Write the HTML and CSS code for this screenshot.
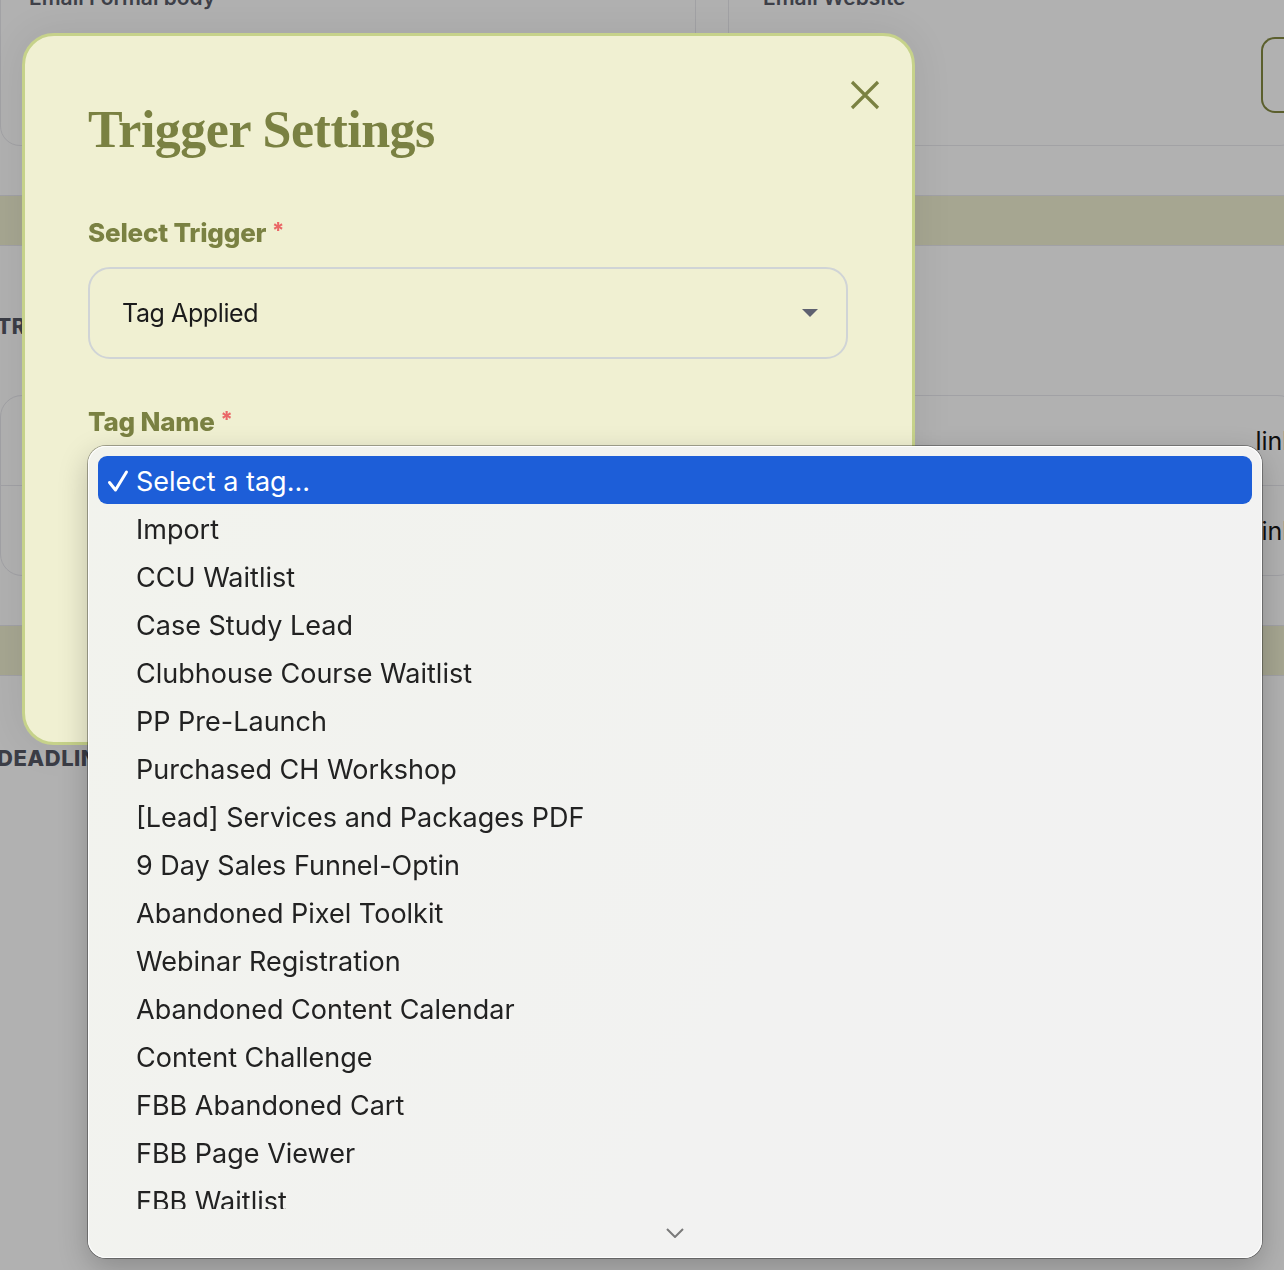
FILE: index.html
```html
<!DOCTYPE html>
<html lang="en">
<head>
    <meta charset="UTF-8">
    <meta name="viewport" content="width=device-width, initial-scale=1.0">
    <title>Trigger Settings</title>
    <link rel="stylesheet" href="styles.css">
</head>
<body>
    <!-- page behind the modal -->
    <div class="page">
        <div class="top-row">
            <div class="card card-left">
                <p class="card-title">Email Formal body</p>
            </div>
            <div class="card card-right">
                <p class="card-title">Email Website</p>
                <span class="card-btn"></span>
            </div>
        </div>
        <div class="band"></div>
        <div class="table-head">TRIGGER</div>
        <div class="table">
            <div class="row"><span class="row-link">link</span></div>
            <div class="row"><span class="row-link">link</span></div>
        </div>
        <div class="band band-low"></div>
        <div class="section-head">DEADLINE</div>
    </div>

    <div class="overlay"></div>

    <div class="modal">
        <button class="close-btn" aria-label="Close">
            <svg width="32" height="32" viewBox="0 0 32 32"><path d="M3 3 L29 29 M29 3 L3 29" stroke="#7a8142" stroke-width="3.2" fill="none"/></svg>
        </button>
        <h1 class="modal-title">Trigger Settings</h1>

        <label class="field-label">Select Trigger <span class="req">*</span></label>
        <div class="select-box">
            <span>Tag Applied</span>
            <span class="caret"></span>
        </div>

        <label class="field-label">Tag Name <span class="req">*</span></label>
        <div class="select-box select-hidden"></div>
    </div>

    <!-- native select popup for Tag Name -->
    <div class="popup">
        <ul class="options">
            <li class="option selected">
                <svg class="check" width="22" height="24" viewBox="0 0 22 24"><path d="M2.5 13.5 L8.5 21 L19.5 3" stroke="#ffffff" stroke-width="3" stroke-linecap="round" stroke-linejoin="round" fill="none"/></svg>
                Select a tag...
            </li>
            <li class="option">Import</li>
            <li class="option">CCU Waitlist</li>
            <li class="option">Case Study Lead</li>
            <li class="option">Clubhouse Course Waitlist</li>
            <li class="option">PP Pre-Launch</li>
            <li class="option">Purchased CH Workshop</li>
            <li class="option">[Lead] Services and Packages PDF</li>
            <li class="option">9 Day Sales Funnel-Optin</li>
            <li class="option">Abandoned Pixel Toolkit</li>
            <li class="option">Webinar Registration</li>
            <li class="option">Abandoned Content Calendar</li>
            <li class="option">Content Challenge</li>
            <li class="option">FBB Abandoned Cart</li>
            <li class="option">FBB Page Viewer</li>
            <li class="option">FBB Waitlist</li>
            <li class="option">FBB Webinar</li>
        </ul>
        <div class="scroll-more">
            <svg width="18" height="10" viewBox="0 0 18 10"><path d="M1 1 L9 9 L17 1" stroke="#7a7a7a" stroke-width="2" fill="none"/></svg>
        </div>
    </div>
</body>
</html>
```

FILE: styles.css
```css
body {
    margin: 0;
    background: #ffffff;
    font-family: Inter, "Liberation Sans", sans-serif;
    height: 1270px;
    overflow: hidden;
}

/* background page */
.page {
    width: 1300px;
}
.top-row {
    display: flex;
    gap: 32px;
    margin-top: -40px;
    height: 186px;
}
.card {
    border: 1px solid #e9e9ee;
    border-radius: 20px;
    box-sizing: border-box;
}
.card-left {
    width: 696px;
    padding: 24px 28px;
}
.card-right {
    flex: 1;
    display: flex;
    align-items: flex-start;
    justify-content: space-between;
    padding: 24px 0 0 34px;
}
.card-title {
    margin: 0;
    font-size: 21px;
    font-weight: 600;
    color: #5a5d69;
}
.card-btn {
    width: 36px;
    height: 72px;
    margin-top: 52px;
    border: 2px solid #838942;
    border-right: none;
    border-radius: 14px 0 0 14px;
}
.band {
    margin-top: 49px;
    height: 49px;
    background: #efefd1;
    border-top: 1px solid #e8e8ee;
    border-bottom: 1px solid #e8e8ee;
}
.table-head {
    height: 149px;
    box-sizing: border-box;
    padding-top: 68px;
    margin-left: -3px;
    font-size: 21px;
    line-height: 26px;
    font-weight: 800;
    color: #555965;
    letter-spacing: 0.5px;
}
.table {
    border: 1px solid #e8e8ee;
    border-radius: 22px;
}
.row {
    height: 89px;
    display: flex;
    align-items: center;
    justify-content: flex-end;
}
.row + .row {
    border-top: 1px solid #e8e8ee;
}
.row-link {
    font-size: 25px;
    color: #181818;
    margin-right: 3px;
}
.band-low {
    margin-top: 49px;
}
.section-head {
    margin: 69px 0 0 -3px;
    font-size: 22px;
    font-weight: 800;
    color: #555965;
    letter-spacing: 0.5px;
}

.overlay {
    position: fixed;
    inset: 0;
    background: rgba(0, 0, 0, 0.305);
}

/* modal */
.modal {
    position: absolute;
    left: 22px;
    top: 33px;
    width: 893px;
    height: 712px;
    box-sizing: border-box;
    padding: 62px 64px 0 63px;
    background: #f0f0d2;
    border: 3px solid #c6d28a;
    border-radius: 32px;
    box-shadow: 0 0 40px rgba(0, 0, 0, 0.08);
}
.close-btn {
    position: absolute;
    top: 43px;
    right: 31px;
    background: none;
    border: none;
    padding: 0;
    cursor: pointer;
}
.modal-title {
    margin: 0 0 52px;
    font-family: "Liberation Serif", serif;
    font-weight: bold;
    font-size: 52px;
    line-height: 64px;
    letter-spacing: -0.5px;
    color: #7a8142;
}
.field-label {
    display: block;
    font-size: 26px;
    line-height: 32px;
    font-weight: 800;
    letter-spacing: -0.2px;
    color: #7a8142;
    margin-bottom: 18px;
}
.req {
    color: #ea6767;
    font-size: 22px;
    vertical-align: 4px;
}
.select-box {
    display: flex;
    align-items: center;
    justify-content: space-between;
    box-sizing: border-box;
    width: 760px;
    height: 92px;
    padding: 0 28px 0 32px;
    border: 2px solid #d0d4d6;
    border-radius: 22px;
    font-size: 25px;
    letter-spacing: -0.4px;
    color: #1b1b1b;
    margin-bottom: 44px;
}
.caret {
    width: 0;
    height: 0;
    border-left: 8px solid transparent;
    border-right: 8px solid transparent;
    border-top: 8px solid #5e6170;
}
.select-hidden {
    margin-bottom: 0;
}

/* popup list */
.popup {
    position: absolute;
    left: 88px;
    top: 446px;
    width: 1174px;
    height: 812px;
    box-sizing: border-box;
    padding: 10px 10px 0;
    background: linear-gradient(120deg, #f2f3ed 0%, #f2f2f1 60%, #f2f2f2 100%);
    border-radius: 18px;
    box-shadow: 0 0 0 1px rgba(0, 0, 0, 0.32), inset 0 0 0 1px rgba(255, 255, 255, 0.9), 0 10px 30px rgba(0, 0, 0, 0.22);
    display: flex;
    flex-direction: column;
}
.options {
    list-style: none;
    margin: 0;
    padding: 0;
    height: 753px;
    overflow: hidden;
}
.option {
    position: relative;
    height: 48px;
    line-height: 52px;
    padding-left: 38px;
    font-size: 27px;
    color: #222222;
    border-radius: 9px;
}
.option.selected {
    background: #1d5ed8;
    color: #ffffff;
}
.check {
    position: absolute;
    left: 9px;
    top: 13px;
}
.scroll-more {
    flex: 1;
    display: flex;
    justify-content: center;
    align-items: center;
    padding-bottom: 2px;
}
```
